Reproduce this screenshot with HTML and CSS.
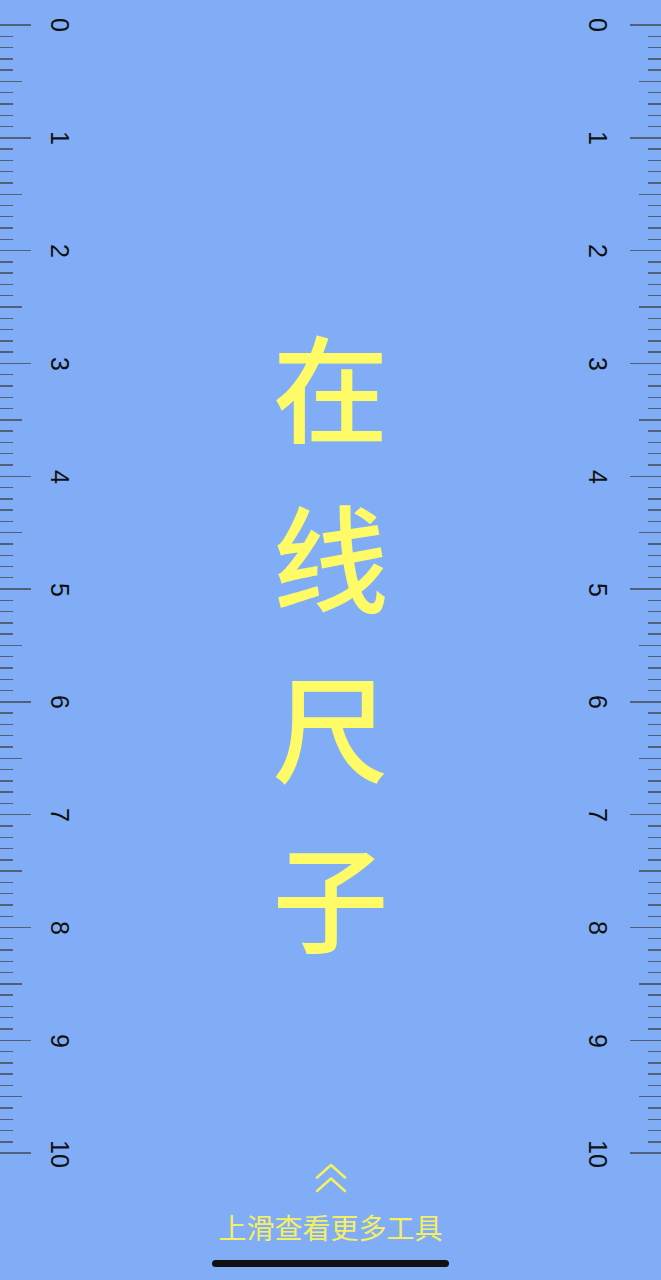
FILE: index.html
```html
<!DOCTYPE html>
<html lang="zh-CN">
<head>
<meta charset="utf-8">
<title>在线尺子</title>
<link rel="stylesheet" href="styles.css">
</head>
<body>
<main class="page">
  <div class="ticks ticks-left">
    <i class="cm"></i><i></i><i></i><i></i><i></i><i class="half"></i><i></i><i></i><i></i><i></i>
    <i class="cm"></i><i></i><i></i><i></i><i></i><i class="half"></i><i></i><i></i><i></i><i></i>
    <i class="cm"></i><i></i><i></i><i></i><i></i><i class="half"></i><i></i><i></i><i></i><i></i>
    <i class="cm"></i><i></i><i></i><i></i><i></i><i class="half"></i><i></i><i></i><i></i><i></i>
    <i class="cm"></i><i></i><i></i><i></i><i></i><i class="half"></i><i></i><i></i><i></i><i></i>
    <i class="cm"></i><i></i><i></i><i></i><i></i><i class="half"></i><i></i><i></i><i></i><i></i>
    <i class="cm"></i><i></i><i></i><i></i><i></i><i class="half"></i><i></i><i></i><i></i><i></i>
    <i class="cm"></i><i></i><i></i><i></i><i></i><i class="half"></i><i></i><i></i><i></i><i></i>
    <i class="cm"></i><i></i><i></i><i></i><i></i><i class="half"></i><i></i><i></i><i></i><i></i>
    <i class="cm"></i><i></i><i></i><i></i><i></i><i class="half"></i><i></i><i></i><i></i><i></i>
    <i class="cm"></i>
  </div>
  <div class="labels labels-left">
    <span class="num"><b>0</b></span><span class="num"><b>1</b></span><span class="num"><b>2</b></span>
    <span class="num"><b>3</b></span><span class="num"><b>4</b></span><span class="num"><b>5</b></span>
    <span class="num"><b>6</b></span><span class="num"><b>7</b></span><span class="num"><b>8</b></span>
    <span class="num"><b>9</b></span><span class="num"><b>10</b></span>
  </div>
  <div class="center">
    <h1 class="title"><span>在</span><span>线</span><span>尺</span><span>子</span></h1>
    <div class="hint">
      <svg class="chevrons" width="34" height="30" viewBox="0 0 34 30" aria-hidden="true">
        <path d="M3 14.5 L17 2 L31 14.5" fill="none" stroke="#f6ef62" stroke-width="2.6" stroke-linecap="round" stroke-linejoin="round"/>
        <path d="M3 28 L17 15.5 L31 28" fill="none" stroke="#f6ef62" stroke-width="2.6" stroke-linecap="round" stroke-linejoin="round"/>
      </svg>
      <p class="hint-text">上滑查看更多工具</p>
      <div class="home-bar"></div>
    </div>
  </div>
  <div class="labels labels-right">
    <span class="num"><b>0</b></span><span class="num"><b>1</b></span><span class="num"><b>2</b></span>
    <span class="num"><b>3</b></span><span class="num"><b>4</b></span><span class="num"><b>5</b></span>
    <span class="num"><b>6</b></span><span class="num"><b>7</b></span><span class="num"><b>8</b></span>
    <span class="num"><b>9</b></span><span class="num"><b>10</b></span>
  </div>
  <div class="ticks ticks-right">
    <i class="cm"></i><i></i><i></i><i></i><i></i><i class="half"></i><i></i><i></i><i></i><i></i>
    <i class="cm"></i><i></i><i></i><i></i><i></i><i class="half"></i><i></i><i></i><i></i><i></i>
    <i class="cm"></i><i></i><i></i><i></i><i></i><i class="half"></i><i></i><i></i><i></i><i></i>
    <i class="cm"></i><i></i><i></i><i></i><i></i><i class="half"></i><i></i><i></i><i></i><i></i>
    <i class="cm"></i><i></i><i></i><i></i><i></i><i class="half"></i><i></i><i></i><i></i><i></i>
    <i class="cm"></i><i></i><i></i><i></i><i></i><i class="half"></i><i></i><i></i><i></i><i></i>
    <i class="cm"></i><i></i><i></i><i></i><i></i><i class="half"></i><i></i><i></i><i></i><i></i>
    <i class="cm"></i><i></i><i></i><i></i><i></i><i class="half"></i><i></i><i></i><i></i><i></i>
    <i class="cm"></i><i></i><i></i><i></i><i></i><i class="half"></i><i></i><i></i><i></i><i></i>
    <i class="cm"></i><i></i><i></i><i></i><i></i><i class="half"></i><i></i><i></i><i></i><i></i>
    <i class="cm"></i>
  </div>
</main>
</body>
</html>
```

FILE: styles.css
```css
html, body {
  margin: 0;
  padding: 0;
  background: #80adf6;
}

.page {
  display: grid;
  grid-template-columns: 31px 61px 1fr 61px 31px;
  height: 1280px;
  overflow: hidden;
  font-family: "Liberation Sans", "Noto Sans CJK SC", sans-serif;
}

/* tick marks */
.ticks {
  display: flex;
  flex-direction: column;
  justify-content: space-between;
  height: 1130.4px;
  margin-top: 24.3px;
}
.ticks i {
  display: block;
  height: 1.4px;
  width: 13px;
  background: #52617a;
}
.ticks i.half { width: 22px; }
.ticks i.cm { width: 31px; }
.ticks-right { align-items: flex-end; }

/* numbers */
.labels {
  display: flex;
  flex-direction: column;
  justify-content: space-between;
  height: 1129px;
  margin-top: 25px;
  padding-right: 4px;
}
.num {
  height: 0;
  display: flex;
  align-items: center;
  justify-content: center;
}
.num b {
  writing-mode: vertical-rl;
  font-weight: normal;
  font-size: 25px;
  line-height: 28px;
  color: #111;
}

/* center column */
.center {
  display: flex;
  flex-direction: column;
  align-items: center;
}
.title {
  margin: 298px 0 0;
  display: flex;
  flex-direction: column;
  align-items: center;
  font-family: "Noto Sans CJK SC", sans-serif;
  font-weight: 500;
  font-size: 116px;
  line-height: 170px;
  color: #fffb66;
}
.hint {
  margin-top: auto;
  display: flex;
  flex-direction: column;
  align-items: center;
  padding-bottom: 13px;
}
.chevrons {
  display: block;
  margin-bottom: 16px;
}
.hint-text {
  margin: 0;
  font-family: "Noto Sans CJK SC", sans-serif;
  font-size: 28px;
  line-height: 36px;
  color: #f6ef62;
}
.home-bar {
  margin-top: 15px;
  width: 237px;
  height: 7px;
  border-radius: 4px;
  background: #111;
}
```
